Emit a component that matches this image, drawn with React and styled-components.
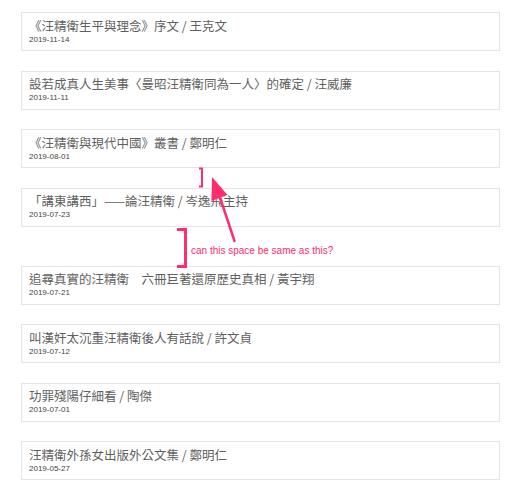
import React from "react";
import styled, { createGlobalStyle } from "styled-components";

const articles = [
  { title: "《汪精衛生平與理念》序文 / 王克文", date: "2019-11-14" },
  { title: "設若成真人生美事〈曼昭汪精衛同為一人〉的確定 / 汪威廉", date: "2019-11-11" },
  { title: "《汪精衛與現代中國》叢書 / 鄭明仁", date: "2019-08-01" },
  { title: "「講東講西」——論汪精衛 / 岑逸飛主持", date: "2019-07-23" },
  { title: "追尋真實的汪精衛　六冊巨著還原歷史真相 / 黃宇翔", date: "2019-07-21", wide: true },
  { title: "叫漢奸太沉重汪精衛後人有話說 / 許文貞", date: "2019-07-12" },
  { title: "功罪殘陽仔細看 / 陶傑", date: "2019-07-01" },
  { title: "汪精衛外孫女出版外公文集 / 鄭明仁", date: "2019-05-27" },
];

export default function App() {
  return (
    <>
      <GlobalStyle />
      <Page>
        <List>
          {articles.map((a) => (
            <Card key={a.date} $wide={a.wide}>
              <Title>{a.title}</Title>
              <DateText>{a.date}</DateText>
            </Card>
          ))}
        </List>
        <Annotation>
          <svg width="523" height="500" viewBox="0 0 523 500">
            <path d="M199 168.5 H202 V186.5 H199" fill="none" stroke="#ff2d6e" strokeWidth="2" />
            <path d="M177 229.5 H185.5 V266.5 H177" fill="none" stroke="#ff2d6e" strokeWidth="3" />
            <path d="M234.5 241 L220.5 199" stroke="#ff2d6e" strokeWidth="2.5" strokeLinecap="round" />
            <polygon points="212,177 227.5,195 211.5,201" fill="#ff2d6e" />
          </svg>
          <Note>can this space be same as this?</Note>
        </Annotation>
      </Page>
    </>
  );
}

const GlobalStyle = createGlobalStyle`
  body {
    margin: 0;
    background: #fff;
    font-family: "Noto Sans CJK TC", "Liberation Sans", sans-serif;
  }
`;

const Page = styled.div`
  position: relative;
  width: 523px;
  height: 500px;
  overflow: hidden;
`;

const List = styled.div`
  display: flex;
  flex-direction: column;
  gap: 19.5px;
  padding: 12px 0 0 21px;
`;

const Card = styled.div`
  box-sizing: border-box;
  width: 479px;
  height: 39px;
  margin-top: ${(p) => (p.$wide ? "19.5px" : "0")};
  padding: 3.5px 7px 0;
  border: 1.5px solid #e4e4e4;
  display: flex;
  flex-direction: column;
`;

const Title = styled.div`
  font-family: "Noto Sans CJK TC", sans-serif;
  font-size: 12.5px;
  line-height: 17px;
  color: #5f5f5f;
  white-space: nowrap;
`;

const DateText = styled.div`
  font-family: "Liberation Sans", sans-serif;
  font-size: 8px;
  line-height: 12px;
  color: #444;
`;

const Annotation = styled.div`
  position: absolute;
  inset: 0;
  pointer-events: none;
  svg {
    position: absolute;
    left: 0;
    top: 0;
  }
`;

const Note = styled.span`
  position: absolute;
  left: 191px;
  top: 244px;
  font-family: "Liberation Sans", sans-serif;
  font-size: 10px;
  line-height: 14px;
  color: #ff2d6e;
  white-space: nowrap;
`;
